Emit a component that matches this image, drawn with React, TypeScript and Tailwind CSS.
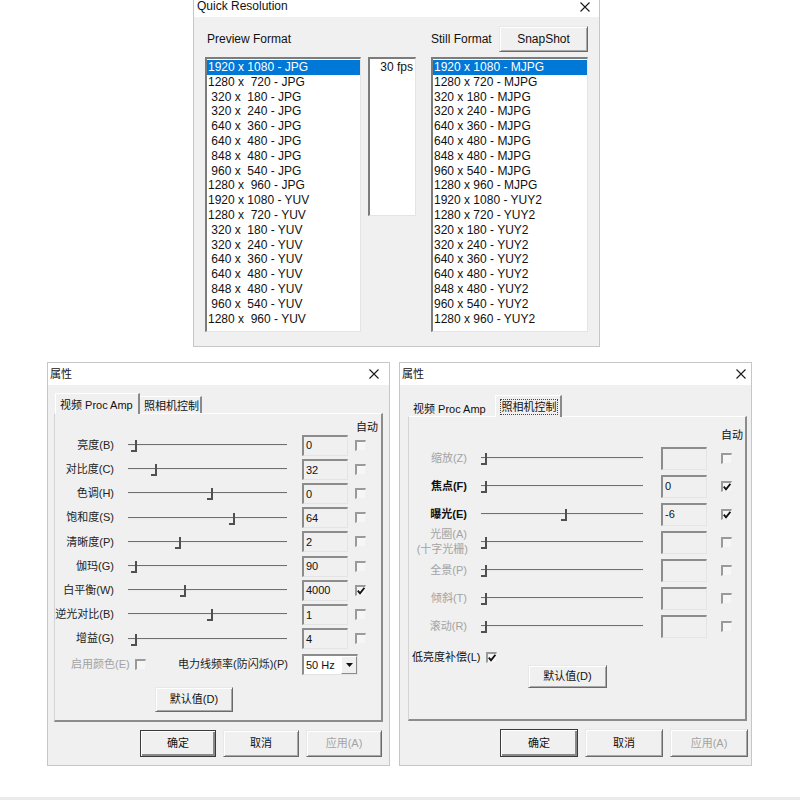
import React from "react";

const previewItems = [
  "1920 x 1080 - JPG",
  "1280 x  720 - JPG",
  " 320 x  180 - JPG",
  " 320 x  240 - JPG",
  " 640 x  360 - JPG",
  " 640 x  480 - JPG",
  " 848 x  480 - JPG",
  " 960 x  540 - JPG",
  "1280 x  960 - JPG",
  "1920 x 1080 - YUV",
  "1280 x  720 - YUV",
  " 320 x  180 - YUV",
  " 320 x  240 - YUV",
  " 640 x  360 - YUV",
  " 640 x  480 - YUV",
  " 848 x  480 - YUV",
  " 960 x  540 - YUV",
  "1280 x  960 - YUV",
];

const stillItems = [
  "1920 x 1080 - MJPG",
  "1280 x 720 - MJPG",
  "320 x 180 - MJPG",
  "320 x 240 - MJPG",
  "640 x 360 - MJPG",
  "640 x 480 - MJPG",
  "848 x 480 - MJPG",
  "960 x 540 - MJPG",
  "1280 x 960 - MJPG",
  "1920 x 1080 - YUY2",
  "1280 x 720 - YUY2",
  "320 x 180 - YUY2",
  "320 x 240 - YUY2",
  "640 x 360 - YUY2",
  "640 x 480 - YUY2",
  "848 x 480 - YUY2",
  "960 x 540 - YUY2",
  "1280 x 960 - YUY2",
];

// thumb offsets in px from the track start
const procAmp = [
  { label: "亮度(B)", pos: 3, value: "0", auto: false },
  { label: "对比度(C)", pos: 23, value: "32", auto: false },
  { label: "色调(H)", pos: 79, value: "0", auto: false },
  { label: "饱和度(S)", pos: 101, value: "64", auto: false },
  { label: "清晰度(P)", pos: 47, value: "2", auto: false },
  { label: "伽玛(G)", pos: 3, value: "90", auto: false },
  { label: "白平衡(W)", pos: 52, value: "4000", auto: true },
  { label: "逆光对比(B)", pos: 79, value: "1", auto: false },
  { label: "增益(G)", pos: 3, value: "4", auto: false },
];

const camera = [
  { label: "缩放(Z)", pos: 0, value: "", auto: false, off: true },
  { label: "焦点(F)", pos: 0, value: "0", auto: true, off: false },
  { label: "曝光(E)", pos: 80, value: "-6", auto: true, off: false },
  { label: "光圈(A)", sub: "(十字光栅)", pos: 0, value: "", auto: false, off: true },
  { label: "全景(P)", pos: 0, value: "", auto: false, off: true },
  { label: "倾斜(T)", pos: 0, value: "", auto: false, off: true },
  { label: "滚动(R)", pos: 0, value: "", auto: false, off: true },
];

function CloseX() {
  return (
    <svg width="10" height="10" viewBox="0 0 10 10" className="shrink-0">
      <path d="M0.5 0.5 L9.5 9.5 M9.5 0.5 L0.5 9.5" stroke="#1a1a1a" strokeWidth="1.1" />
    </svg>
  );
}

function Btn({
  children,
  className = "",
  primary = false,
  disabled = false,
}: {
  children: React.ReactNode;
  className?: string;
  primary?: boolean;
  disabled?: boolean;
}) {
  const frame = primary
    ? "border border-[#3a3a3a] shadow-[inset_1px_1px_0_#ffffff,inset_-2px_-2px_0_#8a8a8a]"
    : "border border-t-[#e8e8e8] border-l-[#e8e8e8] border-r-[#6a6a6a] border-b-[#6a6a6a] shadow-[inset_1px_1px_0_#ffffff,inset_-1px_-1px_0_#a8a8a8]";
  return (
    <div
      className={`flex items-center justify-center bg-[#f0f0f0] shrink-0 ${frame} ${
        disabled ? "text-[#a3a3a3]" : "text-[#111]"
      } ${className}`}
    >
      {children}
    </div>
  );
}

function Check({ checked = false, className = "" }: { checked?: boolean; className?: string }) {
  return (
    <div
      className={`w-[11px] h-[11px] shrink-0 bg-[#f6f6f6] border-t-2 border-l-2 border-t-[#9a9a9a] border-l-[#9a9a9a] border-r border-b border-r-[#f0f0f0] border-b-[#f0f0f0] flex items-center justify-center ${className}`}
    >
      {checked && (
        <svg width="8" height="8" viewBox="0 0 8 8">
          <path d="M0.8 3.6 L3 6.4 L7.4 0.8" fill="none" stroke="#111" strokeWidth="1.8" />
        </svg>
      )}
    </div>
  );
}

function Field({ value, className = "" }: { value: string; className?: string }) {
  return (
    <div
      className={`shrink-0 bg-[#f0f0f0] border-t-2 border-l-2 border-t-[#8c8c8c] border-l-[#8c8c8c] border-r border-b border-r-[#e4e4e4] border-b-[#e4e4e4] pl-[2px] flex items-center text-[11px] text-[#111] ${className}`}
    >
      {value}
    </div>
  );
}

function Slider({ pos, className = "" }: { pos: number; className?: string }) {
  return (
    <div className={`relative h-[20px] shrink-0 ${className}`}>
      <div className="absolute left-0 right-0 top-[9px] h-[2px] border-t border-t-[#6f6f6f] border-b border-b-[#e8e8e8]" />
      <div
        className="absolute top-[5px] w-[6px] h-[12px] border-r-2 border-b-2 border-[#505050]"
        style={{ left: pos }}
      />
    </div>
  );
}

function Dialog({
  title,
  className,
  closePad,
  children,
}: {
  title: string;
  className: string;
  closePad: string;
  children: React.ReactNode;
}) {
  return (
    <div className={`flex flex-col border border-[#c6c6c6] bg-[#f0f0f0] shrink-0 ${className}`}>
      <div className={`h-[22px] bg-white flex items-center justify-between pl-[2px] ${closePad}`}>
        <span className="text-[11px] text-[#111]">{title}</span>
        <CloseX />
      </div>
      {children}
    </div>
  );
}

function ListBox({
  items,
  className,
}: {
  items: string[];
  className: string;
}) {
  return (
    <div
      className={`shrink-0 bg-white border-t-2 border-l-2 border-t-[#7c7c7c] border-l-[#7c7c7c] border-r border-b border-r-[#e4e4e4] border-b-[#e4e4e4] pt-[1px] ${className}`}
    >
      {items.map((it, i) => (
        <div
          key={i}
          className={`h-[14.8px] leading-[14.8px] pl-[1px] whitespace-pre text-[12px] ${
            i === 0 ? "bg-[#0078d7] text-white" : "text-[#111]"
          }`}
        >
          {it}
        </div>
      ))}
    </div>
  );
}

function QuickResolution() {
  return (
    <div className="ml-[193px] w-[407px] h-[347px] border-x border-b border-[#c6c6c6] flex flex-col shrink-0">
      <div className="h-[17px] bg-white flex items-start justify-between pl-[3px] pr-[9px]">
        <span className="text-[12px] leading-[13px] text-[#111]">Quick Resolution</span>
        <div className="mt-[2px]">
          <CloseX />
        </div>
      </div>
      <div className="flex-1 bg-[#f0f0f0] pl-[11px] pt-[9px]">
        <div className="flex items-center h-[26px]">
          <div className="w-[226px] pl-[2px] text-[12px] text-[#111]">Preview Format</div>
          <div className="w-[68px] text-[12px] text-[#111]">Still Format</div>
          <Btn className="w-[89px] h-[26px] text-[12px]">SnapShot</Btn>
        </div>
        <div className="flex items-start mt-[5px]">
          <ListBox items={previewItems} className="w-[156px] h-[275px]" />
          <div className="ml-[7px] w-[48px] h-[159px] shrink-0 bg-white border-t-2 border-l-2 border-t-[#7c7c7c] border-l-[#7c7c7c] border-r border-b border-r-[#e4e4e4] border-b-[#e4e4e4] pt-[1px] pr-[2px] text-right text-[12px] leading-[14.8px] text-[#111]">
            30 fps
          </div>
          <ListBox items={stillItems} className="ml-[15px] w-[157px] h-[275px]" />
        </div>
      </div>
    </div>
  );
}

function ProcAmpDialog() {
  return (
    <Dialog title="属性" className="w-[343px] h-[404px]" closePad="pr-[10px]">
      <div className="pt-[8px] pl-[6px] flex flex-col">
        <div className="flex items-end h-[20px] pl-[1px] text-[11px] text-[#111]">
          <div className="relative z-10 w-[85px] h-[21px] -mb-[1px] bg-[#f0f0f0] border-t border-l border-white border-r-2 border-r-[#8a8a8a] pl-[4px] pt-[3px]">
            视频 Proc Amp
          </div>
          <div className="w-[62px] h-[17px] border-t border-white border-r-2 border-r-[#8a8a8a] pl-[4px] pt-[1px]">
            照相机控制
          </div>
        </div>
        <div className="w-[329px] h-[309px] border-l border-t border-l-[#d4d4d4] border-t-white border-r-2 border-b-2 border-r-[#8c8c8c] border-b-[#8c8c8c] flex flex-col">
          <div className="pt-[7px] pl-[301px] h-[19px] text-[11px] leading-[12px] text-[#111]">自动</div>
          {procAmp.map((r) => (
            <div key={r.label} className="flex items-center h-[24.2px]">
              <div className="w-[59px] text-right text-[11px] text-[#222] whitespace-nowrap">{r.label}</div>
              <Slider pos={r.pos} className="ml-[14px] w-[159px]" />
              <Field value={r.value} className="ml-[15px] w-[46px] h-[21px]" />
              <Check checked={r.auto} className="ml-[7px]" />
            </div>
          ))}
          <div className="flex items-center h-[24px] mt-[2px] text-[11px]">
            <div className="w-[120px] pl-[16px] flex items-center">
              <span className="text-[#a3a3a3] whitespace-nowrap">启用颜色(E)</span>
              <Check className="ml-[5px]" />
            </div>
            <div className="w-[113px] text-right text-[#222] whitespace-nowrap">电力线频率(防闪烁)(P)</div>
            <div className="ml-[14px] w-[56px] h-[21px] shrink-0 bg-white border-t-2 border-l-2 border-t-[#8c8c8c] border-l-[#8c8c8c] border-r border-b border-r-[#e4e4e4] border-b-[#e4e4e4] flex items-center">
              <span className="pl-[2px] flex-1 text-[11px] text-[#111]">50 Hz</span>
              <div className="w-[16px] h-full bg-[#f0f0f0] border-l border-t border-white border-r border-b border-r-[#8c8c8c] border-b-[#8c8c8c] flex items-center justify-center">
                <svg width="7" height="4" viewBox="0 0 7 4">
                  <path d="M0 0 L7 0 L3.5 4 Z" fill="#111" />
                </svg>
              </div>
            </div>
          </div>
          <Btn className="mt-[10px] ml-[100px] w-[78px] h-[25px] text-[11px]">默认值(D)</Btn>
        </div>
        <div className="flex justify-end gap-[7px] mt-[8px] pr-[7px] text-[11px]">
          <Btn primary className="w-[76px] h-[27px]">确定</Btn>
          <Btn className="w-[76px] h-[27px]">取消</Btn>
          <Btn disabled className="w-[76px] h-[27px]">应用(A)</Btn>
        </div>
      </div>
    </Dialog>
  );
}

function CameraDialog() {
  return (
    <Dialog title="属性" className="w-[353px] h-[404px]" closePad="pr-[5px]">
      <div className="pt-[10px] pl-[8px] flex flex-col">
        <div className="flex items-end h-[21px] text-[11px] text-[#111]">
          <div className="w-[87px] h-[18px] pl-[5px] pt-[3px] whitespace-nowrap">视频 Proc Amp</div>
          <div className="relative z-10 w-[67px] h-[22px] -mb-[1px] bg-[#f0f0f0] border-t border-l border-white border-r-2 border-r-[#8a8a8a] pt-[3px] pl-[4px]">
            <div className="border border-dotted border-[#444] w-[58px] h-[16px] flex items-center justify-center whitespace-nowrap">
              照相机控制
            </div>
          </div>
        </div>
        <div className="w-[339px] h-[305px] border-l border-t border-l-[#d4d4d4] border-t-white border-r-2 border-b-2 border-r-[#8c8c8c] border-b-[#8c8c8c] flex flex-col">
          <div className="pt-[12px] pl-[312px] h-[27px] text-[11px] leading-[12px] text-[#111]">自动</div>
          {camera.map((r) => (
            <div key={r.label} className="flex items-center h-[28px]">
              <div
                className={`w-[58px] text-right text-[11px] leading-[15px] whitespace-nowrap ${
                  r.off ? "text-[#a3a3a3]" : "text-[#111] font-bold"
                }`}
              >
                <div>{r.label}</div>
                {r.sub && <div className="-mr-[1px]">{r.sub}</div>}
              </div>
              <Slider pos={r.pos} className="ml-[14px] w-[162px]" />
              <Field value={r.value} className="ml-[18px] w-[46px] h-[23px]" />
              <Check checked={r.auto} className="ml-[14px]" />
            </div>
          ))}
          <div className="flex items-center h-[16px] mt-[9px] pl-[3px] text-[11px] text-[#111]">
            <span className="whitespace-nowrap">低亮度补偿(L)</span>
            <Check checked className="ml-[6px]" />
          </div>
          <Btn className="ml-[119px] w-[79px] h-[23px] text-[11px]">默认值(D)</Btn>
        </div>
        <div className="flex justify-end gap-[7px] mt-[8px] pr-[3px] text-[11px]">
          <Btn primary className="w-[78px] h-[28px]">确定</Btn>
          <Btn className="w-[78px] h-[28px]">取消</Btn>
          <Btn disabled className="w-[78px] h-[28px]">应用(A)</Btn>
        </div>
      </div>
    </Dialog>
  );
}

export default function App() {
  return (
    <div className="w-[800px] h-[800px] bg-white overflow-hidden flex flex-col font-['Liberation_Sans','Noto_Sans_CJK_SC',sans-serif]">
      <QuickResolution />
      <div className="flex mt-[15px] pl-[47px] gap-[9px]">
        <ProcAmpDialog />
        <CameraDialog />
      </div>
      <div className="mt-auto h-[3px] bg-[#ebebeb]" />
    </div>
  );
}
